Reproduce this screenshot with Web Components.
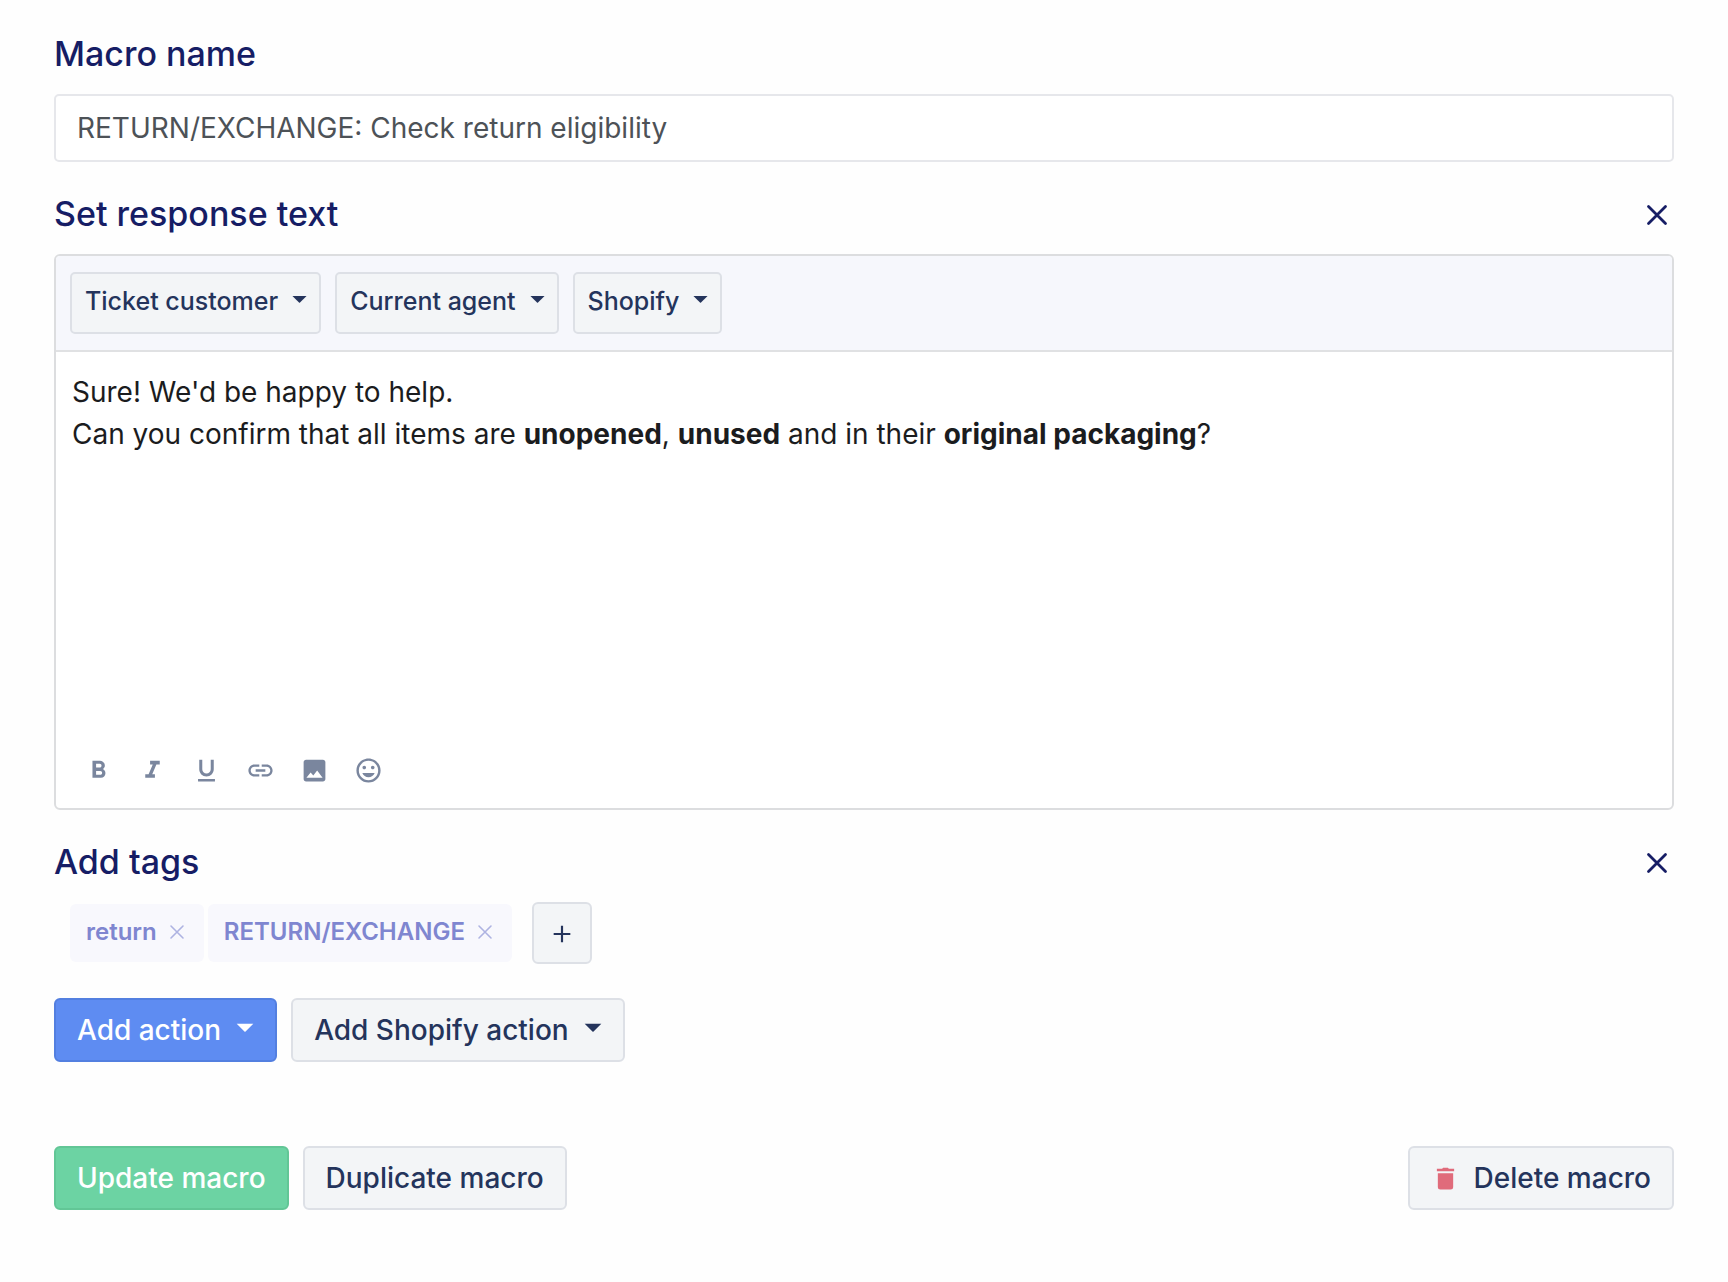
<!DOCTYPE html>
<html lang="en">
<head>
<meta charset="utf-8">
<title>Edit macro</title>
<style>
  body { margin: 0; background: #fefefe; font-family: Inter, "Liberation Sans", sans-serif; }
</style>
</head>
<body>
<macro-form></macro-form>

<script>
const ICONS = {
  bold: '<path d="M15.6 10.79c.97-.67 1.65-1.77 1.65-2.79 0-2.26-1.75-4-4-4H7v14h7.04c2.09 0 3.71-1.7 3.71-3.79 0-1.52-.86-2.82-2.15-3.42zM10 6.5h3c.83 0 1.5.67 1.5 1.5s-.67 1.5-1.5 1.5h-3v-3zm3.5 9H10v-3h3.5c.83 0 1.5.67 1.5 1.5s-.67 1.5-1.5 1.5z"/>',
  italic: '<path d="M10 4v3h2.21l-3.42 8H6v3h8v-3h-2.21l3.42-8H18V4z"/>',
  underline: '<path d="M12 17c3.31 0 6-2.69 6-6V3h-2.5v8c0 1.93-1.57 3.5-3.5 3.5S8.5 12.93 8.5 11V3H6v8c0 3.31 2.69 6 6 6zm-7 2v2h14v-2H5z"/>',
  link: '<path d="M3.9 12c0-1.71 1.39-3.1 3.1-3.1h4V7H7c-2.76 0-5 2.24-5 5s2.24 5 5 5h4v-1.9H7c-1.71 0-3.1-1.39-3.1-3.1zM8 13h8v-2H8v2zm9-6h-4v1.9h4c1.71 0 3.1 1.39 3.1 3.1s-1.39 3.1-3.1 3.1h-4V17h4c2.76 0 5-2.24 5-5s-2.24-5-5-5z"/>',
  image: '<path fill-rule="evenodd" d="M21 19V5c0-1.1-.9-2-2-2H5c-1.1 0-2 .9-2 2v14c0 1.1.9 2 2 2h14c1.1 0 2-.9 2-2zM5.3 18l3.5-4.3 2.200 2.500 3.200-4.200L18.700 18z"/>',
  emoji: '<path d="M11.99 2C6.47 2 2 6.48 2 12s4.47 10 9.99 10C17.52 22 22 17.52 22 12S17.52 2 11.99 2zM12 20c-4.42 0-8-3.58-8-8s3.58-8 8-8 8 3.58 8 8-3.58 8-8 8zm3.5-9c.83 0 1.5-.67 1.5-1.5S16.33 8 15.5 8 14 8.67 14 9.5s.67 1.5 1.5 1.5zm-7 0c.83 0 1.5-.67 1.5-1.5S9.33 8 8.5 8 7 8.67 7 9.5 7.67 11 8.5 11zm3.5 6.5c2.33 0 4.31-1.46 5.11-3.5H6.89c.8 2.04 2.78 3.5 5.11 3.5z"/>',
  close: '<path d="M3.5 3.5l17 17m0-17l-17 17" fill="none" stroke="currentColor" stroke-width="2.8" stroke-linecap="round"/>',
  thin: '<path d="M3 3l18 18m0-18L3 21" fill="none" stroke="currentColor" stroke-width="2.4" stroke-linecap="round"/>',
  plus: '<path d="M12 2v20M2 12h20" fill="none" stroke="currentColor" stroke-width="2.6"/>',
  caret: '<path d="M2 7h20l-9.3 9.3a1 1 0 0 1-1.4 0z"/>',
  trash: '<path d="M4 6.5h16v14.500a2.5 2.5 0 0 1-2.5 2.500h-11A2.5 2.5 0 0 1 4 21zM3 1.8h5.5L9.5.8h5l1 1H21v2.700H3z"/>'
};

function render(host, html) {
  const t = document.createElement('template');
  t.innerHTML = html;
  host.attachShadow({ mode: 'open' }).append(t.content.cloneNode(true));
}

customElements.define('ui-icon', class extends HTMLElement {
  constructor() {
    super();
    render(this, `<style>
      :host { display: inline-flex; flex: none; width: var(--size, 24px); height: var(--size, 24px); }
      svg { width: 100%; height: 100%; fill: currentColor; }
    </style><svg viewBox="0 0 24 24" aria-hidden="true"></svg>`);
  }
  connectedCallback() {
    this.shadowRoot.querySelector('svg').innerHTML = ICONS[this.getAttribute('name')];
  }
});

customElements.define('ui-button', class extends HTMLElement {
  constructor() {
    super();
    render(this, `<style>
      :host { display: block; flex: none; --bg: #f3f5f7; --line: #dde0e6; --ink: #24345c; }
      :host([variant=primary]) { --bg: #5e8cf2; --line: #537fe0; --ink: #fff; }
      :host([variant=success]) { --bg: #6cd3a3; --line: #62c696; --ink: #fff; }
      button { display: flex; align-items: center; box-sizing: border-box; height: 64px; padding: 0 21px;
        border: 2px solid var(--line); border-radius: 6px; background: var(--bg); color: var(--ink);
        font-family: inherit; font-size: 28px; font-weight: 500; line-height: 34px; cursor: pointer; white-space: nowrap; }
      .caret { display: none; --size: 20px; margin: 0 -1px 4px 14px; }
      :host([menu]) .caret { display: inline-flex; }
      :host([size=small]) button { height: 62px; padding: 0 13px 4px; font-size: 25px; line-height: 30px; border-radius: 5px; }
      :host([size=small]) .caret { --size: 17px; margin: 0 -2px 4px 13px; }
      :host([size=square]) button { height: 62px; width: 60px; padding: 2px 0 0; justify-content: center; }
      ::slotted(ui-icon[name=trash]) { --size: 23px; color: #e06b7b; margin-right: 17px; margin-left: 3px; }
      ::slotted(ui-icon[name=plus]) { --size: 20px; }
    </style><button type="button"><slot></slot><ui-icon class="caret" name="caret"></ui-icon></button>`);
  }
  connectedCallback() {
    const b = this.shadowRoot.querySelector('button');
    if (this.hasAttribute('menu')) b.setAttribute('aria-haspopup', 'menu');
    if (this.hasAttribute('label')) b.setAttribute('aria-label', this.getAttribute('label'));
  }
});

customElements.define('icon-button', class extends HTMLElement {
  constructor() {
    super();
    render(this, `<style>
      :host { display: inline-flex; flex: none; }
      button { display: flex; padding: 0; border: 0; background: none; color: inherit; cursor: pointer; }
    </style><button type="button"></button>`);
  }
  connectedCallback() {
    const b = this.shadowRoot.querySelector('button');
    b.setAttribute('aria-label', this.getAttribute('label'));
    const i = document.createElement('ui-icon');
    i.setAttribute('name', this.getAttribute('icon'));
    b.replaceChildren(i);
  }
});

customElements.define('form-section', class extends HTMLElement {
  constructor() {
    super();
    render(this, `<style>
      :host { display: block; }
      header { display: flex; align-items: center; justify-content: space-between; height: 40px; margin-bottom: 20px; padding-right: 5px; color: #161d65; }
      h2 { margin: 0; font-size: 34px; line-height: 40px; font-weight: 500; }
      icon-button { --size: 24px; padding-top: 2px; }
    </style><header><h2></h2></header><slot></slot>`);
  }
  connectedCallback() {
    const title = this.getAttribute('heading');
    this.shadowRoot.querySelector('h2').textContent = title;
    if (this.hasAttribute('removable')) {
      const b = document.createElement('icon-button');
      b.setAttribute('icon', 'close');
      b.setAttribute('label', 'Remove ' + title);
      this.shadowRoot.querySelector('header').append(b);
    }
  }
});

customElements.define('name-field', class extends HTMLElement {
  constructor() {
    super();
    render(this, `<style>
      :host { display: block; }
      label { display: block; margin-bottom: 20px; font-size: 34px; line-height: 40px; font-weight: 500; color: #161d65; }
      input { display: block; box-sizing: border-box; width: 100%; height: 68px; padding: 0 21px; border: 2px solid #e6e7eb;
        border-radius: 5px; background: #fff; color: #4d5257; font-family: inherit; font-size: 28px; outline: 0; }
    </style><label for="name">Macro name</label><input id="name" type="text" value="RETURN/EXCHANGE: Check return eligibility">`);
  }
});

customElements.define('response-editor', class extends HTMLElement {
  constructor() {
    super();
    render(this, `<style>
      :host { display: block; border: 2px solid #dcdddf; border-radius: 6px; background: #fff; overflow: hidden; }
      .variables { display: flex; gap: 14px; padding: 16px 14px; background: #f6f7fc; border-bottom: 2px solid #e0e1e3; }
      .text { min-height: 362px; padding: 19px 16px 0; box-sizing: border-box; font-size: 28px; line-height: 42px; color: #1b1c1e; outline: 0; }
      b { font-weight: 700; }
      .format { display: flex; gap: 25px; padding: 42px 28px 23px; color: #7a869e; --size: 29px; }
    </style>
    <div class="variables"><slot></slot></div>
    <div class="text" contenteditable="true" role="textbox" aria-multiline="true" aria-label="Response text" spellcheck="false"><div>Sure! We'd be happy to help.</div><div>Can you confirm that all items are <b>unopened</b>, <b>unused</b> and in their <b>original packaging</b>?</div></div>
    <div class="format">
      <icon-button icon="bold" label="Bold"></icon-button>
      <icon-button icon="italic" label="Italic"></icon-button>
      <icon-button icon="underline" label="Underline"></icon-button>
      <icon-button icon="link" label="Insert link"></icon-button>
      <icon-button icon="image" label="Insert image"></icon-button>
      <icon-button icon="emoji" label="Insert emoji"></icon-button>
    </div>`);
  }
});

customElements.define('tag-chip', class extends HTMLElement {
  constructor() {
    super();
    render(this, `<style>
      :host { display: flex; align-items: center; box-sizing: border-box; height: 58px; padding: 0 19px 2px 16px; gap: 12px;
        border-radius: 6px; background: #f8f8fd; color: #7f86d0; font-size: 24px; line-height: 30px; font-weight: 600; }
      icon-button { --size: 16px; color: #aeb3e2; }
    </style><span><slot></slot></span><icon-button icon="thin" label="Remove tag"></icon-button>`);
  }
});

customElements.define('macro-form', class extends HTMLElement {
  constructor() {
    super();
    render(this, `<style>
      :host { display: block; }
      form { display: flex; flex-direction: column; gap: 32px; padding: 34px 54px; }
      .tags { display: flex; align-items: center; gap: 4px; padding-left: 16px; }
      .tags ui-button { margin-left: 16px; }
      .row { display: flex; gap: 14px; }
      .actions { margin-top: 2px; }
      .footer { margin-top: 52px; }
      .end { margin-left: auto; }
    </style>
    <form>
      <name-field></name-field>
      <form-section heading="Set response text" removable>
        <response-editor>
          <ui-button size="small" menu>Ticket customer</ui-button>
          <ui-button size="small" menu>Current agent</ui-button>
          <ui-button size="small" menu>Shopify</ui-button>
        </response-editor>
      </form-section>
      <form-section heading="Add tags" removable>
        <div class="tags">
          <tag-chip>return</tag-chip>
          <tag-chip>RETURN/EXCHANGE</tag-chip>
          <ui-button size="square" label="Add tag"><ui-icon name="plus"></ui-icon></ui-button>
        </div>
      </form-section>
      <div class="row actions">
        <ui-button variant="primary" menu>Add action</ui-button>
        <ui-button menu>Add Shopify action</ui-button>
      </div>
      <div class="row footer">
        <ui-button variant="success">Update macro</ui-button>
        <ui-button>Duplicate macro</ui-button>
        <ui-button class="end"><ui-icon name="trash"></ui-icon>Delete macro</ui-button>
      </div>
    </form>`);
  }
});
</script>
</body>
</html>
